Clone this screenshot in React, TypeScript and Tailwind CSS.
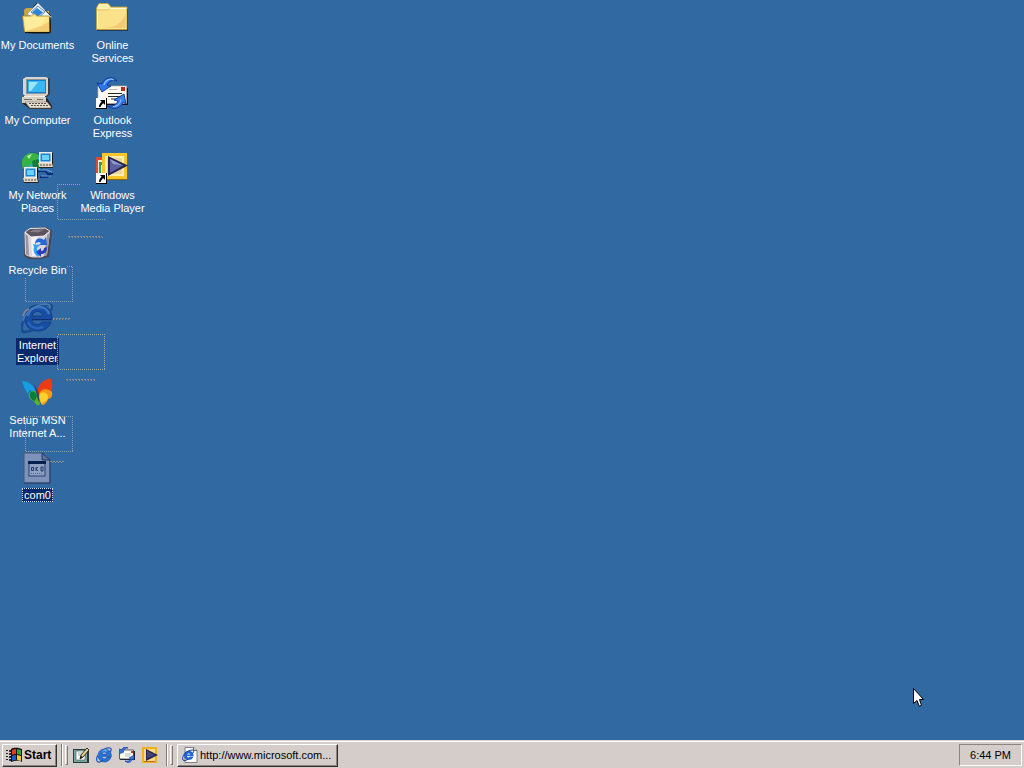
import type { ReactNode } from "react";

const svg32 = "mr-px block h-8 w-8 shrink-0";
const svg16 = "block h-4 w-4 shrink-0";

function ShortcutArrow() {
  return (
    <g>
      <rect x="0" y="21" width="11" height="11" fill="#000" />
      <rect x="0" y="21" width="10" height="10" fill="#fff" />
      <path d="M4 23h5v5l-1.700-1.700C6 27.300 5 28.400 4.600 30H3c0-2.300 1-4 2.700-5.300z" fill="#000" />
    </g>
  );
}

function DocumentsIcon() {
  return (
    <svg viewBox="0 0 32 32" className={svg32} aria-hidden="true">
      <path d="M3 8l2-2h6l2 3h15v19H4z" fill="#c9a53c" />
      <path d="M30 16v14l-2 1.500H5l23-1.500z" fill="#111" />
      <path d="M6 12L17 1l13.500 14-8 8z" fill="#f2f6fb" stroke="#7d93a8" strokeWidth=".7" />
      <path d="M17 4l7 6-7 6-7-6z" fill="#dcecf8" stroke="#3c6ea5" strokeWidth=".8" />
      <path d="M16 6l6 4.500-5 4-6-4z" fill="#2d86d8" />
      <path d="M12 5l4-4M24 8l6 6" stroke="#222" strokeWidth=".8" />
      <path d="M1.500 14h9l2-2h2l1 2h13L29 30H3.500z" fill="#fbe68a" stroke="#a6862c" strokeWidth=".8" />
      <path d="M3 15h22l-7 13H5z" fill="#fff4b0" opacity=".5" />
      <path d="M20 24l8-4v9H5z" fill="#efbd62" opacity=".65" />
      <path d="M29 15v15.500H4" fill="none" stroke="#171208" />
    </svg>
  );
}

function FolderIcon() {
  return (
    <svg viewBox="0 0 32 32" className={svg32} aria-hidden="true">
      <path d="M31 7h1v21.500H1V27h30z" fill="#141414" />
      <path d="M.5 6L3 1.500h9L15 5h16v22.500H.5z" fill="#f9e28a" stroke="#c79f3a" strokeWidth=".8" />
      <path d="M2 4l1.500-2h8L14 5v2H1z" fill="#fff3b0" />
      <path d="M14 6.500h16M1.500 8v18" stroke="#fffbd5" />
      <path d="M29.500 12v14H6c12 0 20-4 23.500-14z" fill="#efb45d" opacity=".55" />
      <path d="M14 5.200L12 8H1" stroke="#d5b24c" strokeWidth=".6" fill="none" />
    </svg>
  );
}

function ComputerIcon() {
  return (
    <svg viewBox="0 0 32 32" className={svg32} aria-hidden="true">
      <path d="M3 2L6 0h20l3 2v15l-3 3H5l-2-2z" fill="#3a3d45" />
      <path d="M2 2l3-2h20l2 1v16l-2 2H4l-2-2z" fill="#d9d5cc" />
      <path d="M5 2h20v15H5z" fill="#8c96a3" />
      <path d="M6 3h19v13H6z" fill="#147fd2" />
      <path d="M7 4h17v11H7z" fill="#39b9f2" />
      <path d="M8 5h9l-7 9H8z" fill="#9ce6ff" />
      <path d="M3 19h21v3H3z" fill="#f2eee4" />
      <path d="M1 21h25l5 8v3H9l-8-6z" fill="#242424" />
      <path d="M1 20h24v6H1z" fill="#d7d0c2" />
      <path d="M3 22.500h8M16 22.500h6" stroke="#6e6b65" />
      <path d="M4 25h22l4 5v1H9z" fill="#e7dfd0" stroke="#86796a" strokeWidth=".6" />
      <path d="M8 26.500h18M10 28.500h17" stroke="#58504a" strokeDasharray="2 1" />
    </svg>
  );
}

function OutlookIcon() {
  return (
    <svg viewBox="0 0 32 32" className={svg32} aria-hidden="true">
      <rect x="5" y="11" width="27" height="17" fill="#15151a" />
      <rect x="2" y="9" width="28.500" height="17.500" fill="#fffaf0" stroke="#b9b0a2" strokeWidth=".7" />
      <rect x="25" y="10" width="4" height="4" fill="#c8231d" />
      <path d="M12 16.500h14M12 19.500h14M15 22h9" stroke="#1c282d" strokeWidth="1.200" />
      <path d="M13 12.500h8" stroke="#bdb7ae" />
      <path d="M21 4C18-.5 9-1 6 7L1 6l5 9 9-6-4-1c2-4 6-6 10-4z" fill="#2d77e5" stroke="#102e9b" strokeWidth=".9" />
      <path d="M8 8c1-5 6-7 10-5" stroke="#83c0ff" strokeWidth="1.200" fill="none" />
      <path d="M11 29c6 4 14 3 16-4l3 2-2-10-10 6 4 1c-2 4-6 6-11 5z" fill="#377fe9" stroke="#12329c" strokeWidth=".9" />
      <path d="M17 29.500c4 0 7-2 8-7" stroke="#9dceff" fill="none" />
      <ShortcutArrow />
    </svg>
  );
}

function MiniComputer() {
  return (
    <g>
      <path d="M0 1h14v11H0z" fill="#18191d" />
      <path d="M0 0h13v11H0z" fill="#f1ecdf" />
      <path d="M1.500 1.500h10v8h-10z" fill="#1684d8" />
      <path d="M3 3h7v5H3z" fill="#6dd2ff" />
      <path d="M-1 12h15l1 4H0z" fill="#252525" />
      <path d="M-1 11h14l1 4H0z" fill="#ded5c4" />
      <path d="M1 13h11" stroke="#544d45" strokeDasharray="2 1" />
    </g>
  );
}

function NetworkIcon() {
  return (
    <svg viewBox="0 0 32 32" className={svg32} aria-hidden="true">
      <circle cx="11.500" cy="11.500" r="11" fill="#15506f" />
      <circle cx="11" cy="11" r="10.300" fill="#39a9ce" />
      <path d="M3 5c4-5 9-5 15-2l-3 6-4 1-3 5-4-2-2 4C0 11 1 8 3 5z" fill="#36b442" />
      <path d="M11 9l6-2 4 4-4 6-5-1zM3 14l4 2v5c-3-1-4-4-4-7z" fill="#187d38" />
      <path d="M6 4l5-2-3 5z" fill="#c6f4b0" />
      <path d="M16 19h8l3 3h5M19 25h7l4-4" stroke="#112c77" strokeWidth="2" fill="none" />
      <path d="M18 18h8l5 2M20 24h10" stroke="#6ba1e8" fill="none" />
      <g transform="translate(18 0)"><MiniComputer /></g>
      <g transform="translate(3 15)"><MiniComputer /></g>
    </svg>
  );
}

function MediaIcon() {
  return (
    <svg viewBox="0 0 32 32" className={svg32} aria-hidden="true">
      <path d="M0 5h8v17H0z" fill="#d84a36" />
      <path d="M2 8h6v14H2z" fill="#f5e9e2" />
      <path d="M3 10h5v12H3z" fill="#2ba158" />
      <path d="M5 13h3v10H5z" fill="#e7edfa" />
      <path d="M7 2h25v26H7z" fill="#8d680b" />
      <path d="M6 1h25v26H6z" fill="#fac52b" />
      <path d="M9 4h19v20H9z" fill="#fff0b0" />
      <path d="M11 6h15v16H11z" fill="#edd794" />
      <path d="M12 4l20 9.500L12 24z" fill="#25255d" />
      <path d="M14 7l13 6.500L14 21z" fill="#59629d" />
      <path d="M14 7l13 6.500L17 12z" fill="#929bc7" />
      <ShortcutArrow />
    </svg>
  );
}

function RecycleIcon() {
  return (
    <svg viewBox="0 0 32 32" className={svg32} aria-hidden="true">
      <path d="M4 4l6-3 15-1 6 4-3 26-8 2H8l-5-3z" fill="#4b4650" />
      <path d="M3.500 5L4 27c2 3 9 4 16 3.500l6-2.500L29 5z" fill="#dcd6dc" />
      <path d="M4.500 7L5 27l3 2-1-20zM26 8l3-3-3 23-3 1z" fill="#9893a2" />
      <path d="M10 10h6v19h-5z" fill="#fff" opacity=".7" />
      <path d="M4 5L9 1.500 24 1l5 3-6 5-13 1z" fill="#5b5360" stroke="#eeeaf0" />
      <path d="M8 5l5-2.500h11l-7 3z" fill="#877c87" />
      <path d="M14 17c0-5 4-7 9-4l2-3 1 8h-8l2-2c-2-2-4-1-6 1z" fill="#2568d4" />
      <path d="M12 17l7 1-3 3c0 3 1 4 3 6l-2 3c-4-3-5-6-4-10z" fill="#35a2ec" />
      <path d="M26 20c0 5-2 7-6 7v3l-5-5 5-4v3c2 0 3-1 3-3z" fill="#263fc0" />
    </svg>
  );
}

function ExplorerIcon() {
  return (
    <svg viewBox="0 0 32 32" className={svg32} aria-hidden="true">
      <path fillRule="evenodd" d="M17 3C9 3 4 9 4 17c0 7 5 12 13 12 6 0 11-3 13-9h-9c-3 4-10 3-10-2h20C32 9 26 3 17 3zm-6 11c1-6 10-6 11 0z" fill="#174da4" stroke="#123a82" strokeWidth=".8" />
      <path d="M7 14C8 8 12 5 18 5c5 0 9 3 10 7" fill="none" stroke="#3978c2" strokeWidth="2.500" />
      <path d="M7 20c2 5 8 8 15 5" fill="none" stroke="#2869bd" strokeWidth="2" />
      <path d="M11 17.500h19" stroke="#112d6b" />
      <path d="M24 3c6-2 8 0 6 6" fill="none" stroke="#194a97" strokeWidth="2.400" />
      <path d="M3 18C0 24-1 30 4 30c3 0 6-1 9-3" fill="none" stroke="#194a97" strokeWidth="2.500" />
      <path d="M2 19C4 10 14 3 24 2c4 0 6 1 5 4" fill="none" stroke="#4d7baf" strokeWidth="1.300" />
      <path d="M2 14c1-4 3-6 6-7" fill="none" stroke="#8c8492" strokeWidth="1.600" />
    </svg>
  );
}

function ButterflyIcon() {
  return (
    <svg viewBox="0 0 32 32" className={svg32} aria-hidden="true">
      <path d="M1 4c6 0 12 4 15 12l-3 3C6 19 4 13 1 4z" fill="#159ee3" />
      <path d="M9 13l7 4-3 3c-3 0-5-2-6-4z" fill="#1664c5" />
      <path d="M8 16c3-3 6-3 8 0l3 11c-2 3-5 0-6-3-4-1-6-4-5-8z" fill="#55b52e" />
      <path d="M9 16c3-3 6-1 7 3l-2 5c-4-1-6-4-5-8z" fill="#087d3d" />
      <path d="M18 19C14 10 21 3 29 1.500c3 1 3 12 0 15z" fill="#ed3b13" />
      <path d="M18 19c0-7 8-9 13-4 1 4-1 7-4 7-1 4-4 6-6 6-2-3-3-6-3-9z" fill="#f49b16" />
      <path d="M19 17c3-3 8-1 8 3 0 4-4 4-6 7-2-3-3-7-2-10z" fill="#ffd02b" />
      <path d="M12 6c4 5 6 10 6 15v4c-2-4-2-7-3-10-1-3-1-6-3-9z" fill="#24446f" />
    </svg>
  );
}

function FileIcon() {
  return (
    <svg viewBox="0 0 32 32" className={svg32} aria-hidden="true">
      <path d="M3 1h19l7 6v24H3z" fill="#758cb5" stroke="#465a80" />
      <path d="M4 2h17v6h7v22H4z" fill="#7e93b9" />
      <path d="M21 1v7h8z" fill="#5b7299" stroke="#213d6c" />
      <path d="M3 31h26V8" fill="none" stroke="#263b64" />
      <rect x="8" y="10" width="16" height="14" fill="#8fa2c2" stroke="#253e72" />
      <path d="M7 9h18v3H7z" fill="#06204f" />
      <path d="M10.500 15.500h2v3h-2zM15 15v4M17 15l-2 2 2 2M20 15v4h2v-4z" fill="none" stroke="#1e3867" />
      <path d="M10 21.500h12" stroke="#526995" strokeDasharray="1 1" />
    </svg>
  );
}

function WindowsFlag() {
  return (
    <svg viewBox="0 0 18 16" className="block h-4 w-[18px] shrink-0" aria-hidden="true">
      <path d="M1 3h2v1H1zM1 6h2v1H1zM1 9h2v1H1zM1 12h2v1H1zM4 3h3v2H4zM4 6h3v2H4zM4 9h3v2H4zM4 12h3v2H4z" fill="#262036" />
      <path d="M6 2c4-2 7-1 11 0v13c-4-2-7-1-11 0z" fill="#111" />
      <path d="M7 3c1.500-1 3-1 4-1v5c-1.500 0-2.500 0-4 1z" fill="#e33828" />
      <path d="M12 2l4 1v5l-4-1z" fill="#31a53b" />
      <path d="M7 9c1.500-1 2.500-1 4-1v5c-1.500 0-2.500 0-4 1z" fill="#2856c6" />
      <path d="M12 8l4 1v5l-4-1z" fill="#f2cc2a" />
      <path d="M4 4h1M4 7h1" stroke="#bd3429" /><path d="M4 10h1M4 13h1" stroke="#244abb" />
    </svg>
  );
}

function ShowDesktopIcon() {
  return (
    <svg viewBox="0 0 16 16" className={svg16} aria-hidden="true">
      <path d="M0 2h12l4 2v12H0z" fill="#263c3c" />
      <path d="M1 3h13v12H1z" fill="#78aaa0" />
      <path d="M3 4h9v9H3z" fill="#fff" stroke="#3c4b49" strokeWidth=".6" />
      <path d="M5 6h4M5 8h3" stroke="#9ba4a5" />
      <path d="M7 12l1-4 6-7 2 2-6 7z" fill="#ead182" stroke="#1b1b1b" strokeWidth=".9" />
      <path d="M7 12l1-3 2 1z" fill="#111" />
    </svg>
  );
}

function SmallExplorer() {
  return (
    <svg viewBox="0 0 16 16" className={svg16} aria-hidden="true">
      <path fillRule="evenodd" d="M8.500 2C4.500 2 2 5 2 8.500S4.500 15 8.500 15c3 0 5.500-1.500 6.500-5h-4.200C9.500 12.500 6 12 6 9.500h9.500C15.500 5 13 2 8.500 2zM6 7c.5-2.500 4-2.500 5 0z" fill="#2473d6" stroke="#123c9f" strokeWidth=".5" />
      <path d="M4 6c1-2 4-3 7-2" stroke="#7bbdf5" fill="none" />
      <path d="M1 14C-1 9 8 0 14 1c2 .5 1 3 0 4M1 14c1 2 4 1 6-1" fill="none" stroke="#174fbd" strokeWidth="1.200" />
      <path d="M2 9c1-4 6-7 10-7" fill="none" stroke="#68aff4" strokeWidth=".7" />
    </svg>
  );
}

function SmallOutlook() {
  return (
    <svg viewBox="0 0 16 16" className={svg16} aria-hidden="true">
      <path d="M1 4h15v9H1z" fill="#161920" />
      <path d="M.500 3h14v9H.500z" fill="#fffdf3" stroke="#343a46" strokeWidth=".8" />
      <path d="M12 4h2v2h-2z" fill="#d13222" />
      <path d="M6 7h6M6 9h5" stroke="#b9b6b0" />
      <path d="M9 1C7-1 3 0 3 3L0 2v5l5-2-1-1c1-2 3-3 5-3z" fill="#2f75de" stroke="#153699" strokeWidth=".6" />
      <path d="M6 14c3 3 7 1 7-2l2 1V8l-5 3 2 .5c-1 2-3 3-6 2.500z" fill="#347be3" stroke="#153699" strokeWidth=".6" />
    </svg>
  );
}

function SmallMedia() {
  return (
    <svg viewBox="0 0 16 16" className={svg16} aria-hidden="true">
      <path d="M0 0h15v16H0z" fill="#f0ae22" />
      <path d="M2 2h11v12H2z" fill="#f9da87" />
      <path d="M2 14h11v1H2z" fill="#b67816" />
      <path d="M4 2l12 6-12 6z" fill="#27265a" />
      <path d="M5 4l8 4-8 3z" fill="#454878" />
    </svg>
  );
}

function WebPageIcon() {
  return (
    <svg viewBox="0 0 16 16" className={svg16} aria-hidden="true">
      <path d="M3 .5h8.500l3.500 3V15.500H3z" fill="#fff" stroke="#65656d" strokeWidth=".8" />
      <path d="M11.500 .5v3H15" fill="#d5d8e1" stroke="#444" strokeWidth=".8" />
      <path fillRule="evenodd" d="M6.500 4C3.500 4 2 6 2 8.500S3.500 13 6.500 13c2.500 0 4-1 5-3.500H8c-1 1.500-3 1-3-.500h6.500C12 6 10 4 6.500 4zM5 7.500C5.500 6 8 6 8.500 7.500z" fill="#2264d0" />
      <path d="M1 13C-1 9 5 3 10 3c2 0 2 1 1 3M1 13c1 1 3 1 5-1" stroke="#153e9e" fill="none" />
    </svg>
  );
}

type Shortcut = { lines: string[]; icon: ReactNode; state?: "selected" | "focused" };

const shortcuts: Shortcut[] = [
  { lines: ["My Documents"], icon: <DocumentsIcon /> },
  { lines: ["My Computer"], icon: <ComputerIcon /> },
  { lines: ["My Network", "Places"], icon: <NetworkIcon /> },
  { lines: ["Recycle Bin"], icon: <RecycleIcon /> },
  { lines: ["Internet", "Explorer"], icon: <ExplorerIcon />, state: "selected" },
  { lines: ["Setup MSN", "Internet A..."], icon: <ButterflyIcon /> },
  { lines: ["com0"], icon: <FileIcon />, state: "focused" },
  { lines: ["Online", "Services"], icon: <FolderIcon /> },
  { lines: ["Outlook", "Express"], icon: <OutlookIcon /> },
  { lines: ["Windows", "Media Player"], icon: <MediaIcon /> },
];

const labelStyles = {
  plain: "",
  selected: "bg-[#08296b] px-px",
  focused: "bg-[#08296b] px-0.5 outline-1 outline-dotted outline-[#d6dfef] -outline-offset-1",
};

function DesktopItem({ lines, icon, state }: Shortcut) {
  return (
    <button type="button" className="flex flex-col items-center gap-1 pt-0.5">
      {icon}
      <span className={`${labelStyles[state ?? "plain"]} pt-px text-center whitespace-nowrap`}>
        {lines.map((line) => (
          <span key={line} className="block">{line}</span>
        ))}
      </span>
    </button>
  );
}

function DragOutlines() {
  return (
    <svg className="pointer-events-none absolute top-0 left-0 h-[510px] w-[150px]" viewBox="0 0 150 510" shapeRendering="crispEdges" fill="none" aria-hidden="true">
      <g stroke="#91a0aa" strokeDasharray="1 1">
        <path d="M80 184.500H57.500V219.500H105" />
        <path d="M67 266.500h5.500v35h-47V278" />
        <path d="M57.500 334.500h47v35h-47z" stroke="#aaa898" />
        <path d="M25.500 416.500h47v35h-47z" />
      </g>
      <g stroke="#8f8e8c">
        <path d="M68 236.500h34M66 379.500h30" strokeDasharray="2 1" />
        <path d="M69 237.500h34M67 380.500h29" strokeDasharray="1 2" />
        <path d="M53 318.500h17M50 461.500h14" strokeDasharray="2 1" />
        <path d="M53 319.500h16M52 462.500h12" strokeDasharray="1 2" />
      </g>
    </svg>
  );
}

function Pointer() {
  return (
    <svg viewBox="0 0 12 20" className="pointer-events-none absolute right-[99px] bottom-8 h-5 w-3" aria-hidden="true">
      <path d="M.5 .5v15l3.500-3 2.300 5.800 2.200-1L6.500 11.500h4z" fill="#fff" stroke="#000" />
    </svg>
  );
}

function Grip() {
  return (
    <span className="flex h-[22px] shrink-0 items-center gap-0.5" aria-hidden="true">
      <span className="h-full w-0.5 border-r border-l border-r-white border-l-[#817b78]" />
      <span className="h-5 w-[3px] border border-t-white border-r-[#817b78] border-b-[#817b78] border-l-white" />
    </span>
  );
}

const raised = "border border-t-white border-r-[#34302f] border-b-[#34302f] border-l-white shadow-[inset_-1px_-1px_0_#8b8481]";

const launchers = [
  { name: "Show Desktop", icon: <ShowDesktopIcon /> },
  { name: "Internet Explorer", icon: <SmallExplorer /> },
  { name: "Outlook Express", icon: <SmallOutlook /> },
  { name: "Windows Media Player", icon: <SmallMedia /> },
];

function Taskbar() {
  return (
    <footer className="flex h-7 items-center border-t border-[#ddd5d1] bg-[#d5cdc9] px-0.5 pt-px text-black shadow-[inset_0_1px_0_#fff]">
      <button type="button" className={`${raised} flex h-[23px] w-[55px] items-center gap-px pl-0.5 text-[12px] font-bold`}>
        <WindowsFlag />
        Start
      </button>
      <div className="ml-1"><Grip /></div>
      <nav aria-label="Quick Launch" className="ml-1 flex items-center gap-[7px] pl-px">
        {launchers.map(({ name, icon }) => (
          <button key={name} type="button" aria-label={name}>{icon}</button>
        ))}
      </nav>
      <div className="ml-2"><Grip /></div>
      <button type="button" className={`${raised} ml-1 flex h-[23px] w-[161px] items-center gap-0.5 pl-1 whitespace-nowrap`}>
        <WebPageIcon />
        http://www.microsoft.com...
      </button>
      <time className="ml-auto flex h-[22px] w-[63px] items-center justify-center border border-t-[#8b8481] border-r-white border-b-white border-l-[#8b8481]">
        6:44 PM
      </time>
    </footer>
  );
}

export default function App() {
  return (
    <div className="flex min-h-screen cursor-default flex-col bg-[#3169a2] font-['Liberation_Sans',Arial,sans-serif] text-[11px] leading-[13px]">
      <main className="relative flex-1 text-white">
        <div className="grid w-max grid-flow-col grid-cols-[75px_75px] grid-rows-[repeat(7,75px)]">
          {shortcuts.map((item) => (
            <DesktopItem key={item.lines[0]} {...item} />
          ))}
        </div>
        <DragOutlines />
        <Pointer />
      </main>
      <Taskbar />
    </div>
  );
}
